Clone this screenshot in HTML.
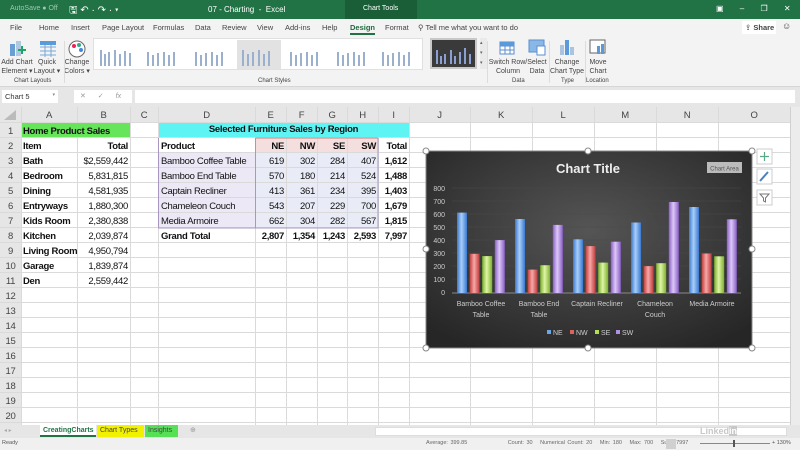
<!DOCTYPE html>
<html><head><meta charset="utf-8"><style>
*{margin:0;padding:0;box-sizing:border-box}
body{width:800px;height:450px;overflow:hidden;background:#fff;font-family:"Liberation Sans",sans-serif;position:relative}
.a{position:absolute;white-space:nowrap}
.t{font-size:9.5px;color:#111;letter-spacing:-0.3px}
.b{font-weight:bold}
.r{text-align:right}
.c{text-align:center}
.s{font-size:7px;color:#444}
</style></head><body>
<!-- title bar -->
<div class="a" style="left:0;top:0;width:800px;height:19px;background:#217346"></div>
<div class="a" style="left:345px;top:0;width:72px;height:19px;background:#1a5e38"></div>
<div class="a" style="left:10px;top:5px;font-size:7px;color:#9fc7ae">AutoSave ● Off</div>
<div class="a" style="left:69px;top:3px;font-size:10px;color:#fff">🖫 ↶ · ↷ · ▾</div>
<div class="a" style="left:208px;top:5px;font-size:8px;color:#fff">07 - Charting &nbsp;-&nbsp; Excel</div>
<div class="a" style="left:363px;top:5px;font-size:7px;color:#fff">Chart Tools</div>
<div class="a" style="left:716px;top:4px;font-size:8px;color:#fff;word-spacing:14px">▣ – ❐ ✕</div>
<!-- tabs -->
<div class="a" style="left:0;top:19px;width:800px;height:68px;background:#f3f3f3;border-bottom:1px solid #d6d6d6"></div>
<div class="a" style="left:10px;top:23px;font-size:7.5px;color:#444">File</div>
<div class="a" style="left:39px;top:23px;font-size:7.5px;color:#444">Home</div>
<div class="a" style="left:71px;top:23px;font-size:7.5px;color:#444">Insert</div>
<div class="a" style="left:102px;top:23px;font-size:7.5px;color:#444">Page Layout</div>
<div class="a" style="left:153px;top:23px;font-size:7.5px;color:#444">Formulas</div>
<div class="a" style="left:195px;top:23px;font-size:7.5px;color:#444">Data</div>
<div class="a" style="left:222px;top:23px;font-size:7.5px;color:#444">Review</div>
<div class="a" style="left:257px;top:23px;font-size:7.5px;color:#444">View</div>
<div class="a" style="left:285px;top:23px;font-size:7.5px;color:#444">Add-ins</div>
<div class="a" style="left:322px;top:23px;font-size:7.5px;color:#444">Help</div>
<div class="a" style="left:350px;top:23px;font-size:7.5px;color:#1e6b3f;font-weight:bold;border-bottom:2px solid #217346;padding-bottom:1px">Design</div>
<div class="a" style="left:385px;top:23px;font-size:7.5px;color:#444">Format</div>
<div class="a" style="left:418px;top:23px;font-size:7.5px;color:#444">⚲ Tell me what you want to do</div>
<div class="a" style="left:742px;top:21px;width:34px;height:13px;background:#fff;font-size:7.5px;color:#444;padding:2px 3px">⇪ <b>Share</b></div>
<div class="a" style="left:782px;top:21px;font-size:9px;color:#444">☺</div>
<!-- ribbon -->
<div class="a" style="left:2px;top:40px;width:28px;height:18px">
<svg width="28" height="18"><rect x="8" y="4" width="5" height="12" fill="#6a9fd4"/><rect x="14" y="1" width="5" height="15" fill="#b0c8e0"/><path d="M16 10h8M20 6v8" stroke="#21a366" stroke-width="2"/></svg></div>
<div class="a" style="left:37px;top:40px"><svg width="22" height="18"><rect x="3" y="1" width="16" height="4" fill="#5a9ad8"/><path d="M3 7h16M3 11h16M3 15h16M8 5v12M14 5v12" stroke="#7aa8d6"/></svg></div>
<div class="a" style="left:67px;top:39px"><svg width="20" height="20"><circle cx="10" cy="10" r="8" fill="#fff" stroke="#666"/><circle cx="7" cy="7" r="2" fill="#e25"/><circle cx="12" cy="6" r="2" fill="#3a8"/><circle cx="14" cy="11" r="2" fill="#48d"/></svg></div>
<div class="a s c" style="left:0;top:58px;width:34px;line-height:9px">Add Chart<br>Element ▾</div>
<div class="a s c" style="left:33px;top:58px;width:28px;line-height:9px">Quick<br>Layout ▾</div>
<div class="a s c" style="left:62px;top:58px;width:30px;line-height:9px">Change<br>Colors ▾</div>
<div class="a s" style="left:14px;top:78px;font-size:6px">Chart Layouts</div>
<div class="a" style="left:93px;top:38px;width:330px;height:32px;background:#fff;border:1px solid #e0e0e0"></div>
<svg class="a" style="left:93px;top:38px" width="340" height="34">
<rect x="144" y="2" width="44" height="29" fill="#e2e2e2"/>
<g stroke="#9ab0cc" stroke-width="2">
<path d="M8 12v16M12 16v12M16 14v14M22 12v16M27 16v12M32 13v15M37 15v13"/>
<path d="M55 14v14M60 17v11M65 15v13M71 14v14M76 17v11M81 14v14"/>
<path d="M103 14v14M108 17v11M113 15v13M119 14v14M124 17v11M129 14v14"/>
<path d="M150 12v16M155 16v12M160 14v14M166 12v16M171 16v12M176 13v15"/>
<path d="M198 14v14M203 17v11M208 15v13M214 14v14M219 17v11M224 14v14"/>
<path d="M245 14v14M250 17v11M255 15v13M261 14v14M266 17v11M271 14v14"/>
<path d="M290 14v14M295 17v11M300 15v13M306 14v14M311 17v11M316 14v14"/>
</g></svg>
<div class="a" style="left:430px;top:38px;width:47px;height:31px;background:#3a3a3a;border:2px solid #c8c8c8"></div>
<svg class="a" style="left:432px;top:44px" width="44" height="22"><path d="M5 6v14M9 12v8M13 10v10M19 6v14M23 12v8M28 8v12M33 4v16M38 10v10" stroke="#8aa0d0" stroke-width="2"/></svg>
<div class="a" style="left:480px;top:38px;width:7px;height:31px;background:#eaeaea;font-size:5px;color:#666;line-height:10px">▴<br>▾<br>▾</div>
<svg class="a" style="left:497px;top:38px" width="22" height="18"><rect x="3" y="4" width="14" height="12" fill="#fff" stroke="#5a8ed0"/><path d="M3 8h14M3 12h14M8 4v12M13 4v12" stroke="#5a8ed0"/><rect x="3" y="4" width="14" height="4" fill="#5a9ad8"/></svg>
<svg class="a" style="left:527px;top:38px" width="20" height="18"><rect x="2" y="2" width="15" height="12" fill="#8ab8e6" stroke="#5a8ed0"/><rect x="10" y="8" width="8" height="9" fill="#fff" stroke="#5a8ed0"/></svg>
<svg class="a" style="left:557px;top:38px" width="20" height="18"><rect x="3" y="7" width="4" height="10" fill="#aac4e0"/><rect x="8" y="2" width="4" height="15" fill="#5a9ad8"/><rect x="13" y="9" width="4" height="8" fill="#aac4e0"/></svg>
<svg class="a" style="left:588px;top:38px" width="20" height="18"><rect x="2" y="2" width="15" height="13" fill="#fff" stroke="#666"/><rect x="9" y="8" width="3" height="8" fill="#5a9ad8"/><rect x="13" y="6" width="3" height="10" fill="#5a9ad8"/></svg>
<div class="a s c" style="left:488px;top:58px;width:40px;line-height:9px">Switch Row/<br>Column</div>
<div class="a s c" style="left:526px;top:58px;width:22px;line-height:9px">Select<br>Data</div>
<div class="a s c" style="left:549px;top:58px;width:36px;line-height:9px">Change<br>Chart Type</div>
<div class="a s c" style="left:586px;top:58px;width:24px;line-height:9px">Move<br>Chart</div>
<div class="a s" style="left:258px;top:78px;font-size:6px">Chart Styles</div>
<div class="a s" style="left:512px;top:78px;font-size:6px">Data</div>
<div class="a s" style="left:561px;top:78px;font-size:6px">Type</div>
<div class="a s" style="left:586px;top:78px;font-size:6px">Location</div>
<div class="a" style="left:64px;top:41px;width:1px;height:42px;background:#dcdcdc"></div>
<div class="a" style="left:487px;top:41px;width:1px;height:42px;background:#dcdcdc"></div>
<div class="a" style="left:549px;top:41px;width:1px;height:42px;background:#dcdcdc"></div>
<div class="a" style="left:585px;top:41px;width:1px;height:42px;background:#dcdcdc"></div>
<!-- formula bar -->
<div class="a" style="left:0;top:87px;width:800px;height:20px;background:#e6e6e6"></div>
<div class="a" style="left:2px;top:90px;width:56px;height:13px;background:#fff;font-size:7.5px;color:#333;padding:2px 3px">Chart 5<span style="float:right;font-size:5px;color:#888">▾</span></div>
<div class="a" style="left:74px;top:90px;width:58px;height:13px;background:#fff;font-size:7px;color:#999;padding:2px 6px;word-spacing:10px">✕ ✓ <i>fx</i></div>
<div class="a" style="left:135px;top:90px;width:660px;height:13px;background:#fff"></div>
<!-- grid -->
<div class="a" style="left:0;top:107px;width:790px;height:16px;background:#e6e6e6"></div>
<div class="a" style="left:0;top:107px;width:21px;height:318px;background:#e6e6e6"></div>
<div class="a" style="left:790px;top:107px;width:10px;height:318px;background:#ececec;border-left:1px solid #d0d0d0"></div>
<div class="a" style="left:255px;top:138px;width:123px;height:15px;background:#f5dede"></div>
<div class="a" style="left:158px;top:153px;width:97px;height:75px;background:#ede8f6"></div>
<div class="a" style="left:255px;top:153px;width:123px;height:75px;background:#e9ecf7"></div>
<svg class="a" style="left:0;top:107px" width="790" height="318">
<g stroke="#dadada" stroke-width="1">
<path d="M21.5 0v318M77.5 0v318M130.5 0v318M158.5 0v318M255.5 0v318M286.5 0v318M317.5 0v318M347.5 0v318M378.5 0v318M409.5 0v318M470.5 0v318M532.5 0v318M594.5 0v318M656.5 0v318M718.5 0v318"/>
<path d="M0 15.5h790M0 30.5h790M0 45.5h790M0 60.5h790M0 75.5h790M0 90.5h790M0 105.5h790M0 120.5h790M0 135.5h790M0 150.5h790M0 165.5h790M0 180.5h790M0 195.5h790M0 210.5h790M0 225.5h790M0 240.5h790M0 255.5h790M0 270.5h790M0 285.5h790M0 300.5h790M0 315.5h790"/>
</g>
<rect x="22" y="16" width="108" height="14" fill="#66e45a"/>
<rect x="159" y="16" width="250" height="14" fill="#5ff4f4"/>
<path d="M158.5 31v90h219.5v-90M255.5 31v90" stroke="#a898c0" fill="none"/>
<path d="M255.5 31h122.5" stroke="#d08080"/>
<path d="M4 13l12-10v10z" fill="#bbb"/>
</svg>
<div class="a t c" style="left:21px;top:110px;width:56px;color:#444">A</div>
<div class="a t c" style="left:77px;top:110px;width:53px;color:#444">B</div>
<div class="a t c" style="left:130px;top:110px;width:28px;color:#444">C</div>
<div class="a t c" style="left:158px;top:110px;width:97px;color:#444">D</div>
<div class="a t c" style="left:255px;top:110px;width:31px;color:#444">E</div>
<div class="a t c" style="left:286px;top:110px;width:31px;color:#444">F</div>
<div class="a t c" style="left:317px;top:110px;width:30px;color:#444">G</div>
<div class="a t c" style="left:347px;top:110px;width:31px;color:#444">H</div>
<div class="a t c" style="left:378px;top:110px;width:31px;color:#444">I</div>
<div class="a t c" style="left:409px;top:110px;width:61px;color:#444">J</div>
<div class="a t c" style="left:470px;top:110px;width:62px;color:#444">K</div>
<div class="a t c" style="left:532px;top:110px;width:62px;color:#444">L</div>
<div class="a t c" style="left:594px;top:110px;width:62px;color:#444">M</div>
<div class="a t c" style="left:656px;top:110px;width:62px;color:#444">N</div>
<div class="a t c" style="left:718px;top:110px;width:72px;color:#444">O</div>
<div class="a t c" style="left:0;top:124px;width:21px;line-height:15px;color:#444">1<br>2<br>3<br>4<br>5<br>6<br>7<br>8<br>9<br>10<br>11<br>12<br>13<br>14<br>15<br>16<br>17<br>18<br>19<br>20</div>
<div class="a t b" style="left:23px;top:124px;line-height:15px">Home Product Sales<br>Item<br>Bath<br>Bedroom<br>Dining<br>Entryways<br>Kids Room<br>Kitchen<br>Living Room<br>Garage<br>Den</div>
<div class="a t r" style="left:77px;top:139px;width:51px;line-height:15px"><b>Total</b><br>$2,559,442<br>5,831,815<br>4,581,935<br>1,880,300<br>2,380,838<br>2,039,874<br>4,950,794<br>1,839,874<br>2,559,442</div>
<div class="a t b c" style="left:158px;top:124px;width:251px">Selected Furniture Sales by Region</div>
<div class="a t" style="left:161px;top:139px;line-height:15px"><b>Product</b><br>Bamboo Coffee Table<br>Bamboo End Table<br>Captain Recliner<br>Chameleon Couch<br>Media Armoire<br><b>Grand Total</b></div>
<div class="a t r" style="left:255px;top:139px;width:29px;line-height:15px"><b>NE</b><br>619<br>570<br>413<br>543<br>662<br><b>2,807</b></div>
<div class="a t r" style="left:286px;top:139px;width:29px;line-height:15px"><b>NW</b><br>302<br>180<br>361<br>207<br>304<br><b>1,354</b></div>
<div class="a t r" style="left:317px;top:139px;width:28px;line-height:15px"><b>SE</b><br>284<br>214<br>234<br>229<br>282<br><b>1,243</b></div>
<div class="a t r" style="left:347px;top:139px;width:29px;line-height:15px"><b>SW</b><br>407<br>524<br>395<br>700<br>567<br><b>2,593</b></div>
<div class="a t r b" style="left:378px;top:139px;width:29px;line-height:15px">Total<br>1,612<br>1,488<br>1,403<br>1,679<br>1,815<br>7,997</div>
<!-- chart -->
<svg class="a" style="left:420px;top:145px" width="360" height="210">
<defs>
<radialGradient id="bg" cx="50%" cy="40%" r="70%"><stop offset="0" stop-color="#555"/><stop offset="1" stop-color="#262626"/></radialGradient>
<linearGradient id="ne" x1="0" x2="1"><stop offset="0" stop-color="#3a78d0"/><stop offset=".45" stop-color="#a9cff8"/><stop offset="1" stop-color="#3a78d0"/></linearGradient>
<linearGradient id="nw" x1="0" x2="1"><stop offset="0" stop-color="#c03a3a"/><stop offset=".45" stop-color="#f6a8a8"/><stop offset="1" stop-color="#c03a3a"/></linearGradient>
<linearGradient id="se" x1="0" x2="1"><stop offset="0" stop-color="#7ab02a"/><stop offset=".45" stop-color="#dff5a8"/><stop offset="1" stop-color="#7ab02a"/></linearGradient>
<linearGradient id="sw" x1="0" x2="1"><stop offset="0" stop-color="#8a5ec8"/><stop offset=".45" stop-color="#dcc8f6"/><stop offset="1" stop-color="#8a5ec8"/></linearGradient>
</defs>
<rect x="6" y="6" width="326" height="197" fill="url(#bg)" stroke="#888"/>
<g stroke="#4a4a4a" stroke-width=".6"><path d="M32 43h289M32 56h289M32 69h289M32 82h289M32 95h289M32 108h289M32 121h289M32 134h289"/></g>
<path d="M32 148h289" stroke="#888"/>
<text x="168" y="28" fill="#eee" font-size="13" font-weight="bold" text-anchor="middle" font-family="Liberation Sans">Chart Title</text>
<rect x="287" y="17" width="35" height="11" fill="#bbb"/>
<text x="304.5" y="25.5" fill="#555" font-size="6" text-anchor="middle" font-family="Liberation Sans">Chart Area</text>
<g fill="#ccc" font-size="7" text-anchor="end" font-family="Liberation Sans">
<text x="25" y="46">800</text><text x="25" y="59">700</text><text x="25" y="72">600</text><text x="25" y="85">500</text><text x="25" y="98">400</text><text x="25" y="111">300</text><text x="25" y="124">200</text><text x="25" y="137">100</text><text x="25" y="150">0</text>
</g>
<g>
<rect x="37" y="67.6" width="10" height="80.4" fill="url(#ne)"/><rect x="49.6" y="108.8" width="10" height="39.2" fill="url(#nw)"/><rect x="62.2" y="111.1" width="10" height="36.9" fill="url(#se)"/><rect x="74.8" y="95.1" width="10" height="52.9" fill="url(#sw)"/>
<rect x="95" y="74" width="10" height="74" fill="url(#ne)"/><rect x="107.6" y="124.6" width="10" height="23.4" fill="url(#nw)"/><rect x="120.2" y="120.2" width="10" height="27.8" fill="url(#se)"/><rect x="132.8" y="79.9" width="10" height="68.1" fill="url(#sw)"/>
<rect x="153" y="94.3" width="10" height="53.7" fill="url(#ne)"/><rect x="165.6" y="101.1" width="10" height="46.9" fill="url(#nw)"/><rect x="178.2" y="117.6" width="10" height="30.4" fill="url(#se)"/><rect x="190.8" y="96.7" width="10" height="51.3" fill="url(#sw)"/>
<rect x="211" y="77.5" width="10" height="70.5" fill="url(#ne)"/><rect x="223.6" y="121.1" width="10" height="26.9" fill="url(#nw)"/><rect x="236.2" y="118.2" width="10" height="29.8" fill="url(#se)"/><rect x="248.8" y="57" width="10" height="91" fill="url(#sw)"/>
<rect x="269" y="62" width="10" height="86" fill="url(#ne)"/><rect x="281.6" y="108.5" width="10" height="39.5" fill="url(#nw)"/><rect x="294.2" y="111.3" width="10" height="36.7" fill="url(#se)"/><rect x="306.8" y="74.3" width="10" height="73.7" fill="url(#sw)"/>
</g>
<g fill="#ccc" font-size="7" text-anchor="middle" font-family="Liberation Sans">
<text x="61" y="161">Bamboo Coffee</text><text x="61" y="172">Table</text>
<text x="119" y="161">Bamboo End</text><text x="119" y="172">Table</text>
<text x="177" y="161">Captain Recliner</text>
<text x="235" y="161">Chameleon</text><text x="235" y="172">Couch</text>
<text x="292" y="161">Media Armoire</text>
</g>
<g font-size="7" fill="#ccc" font-family="Liberation Sans">
<rect x="127" y="185" width="4" height="4" fill="#6aa6ea"/><text x="133" y="190">NE</text>
<rect x="150" y="185" width="4" height="4" fill="#e06060"/><text x="156" y="190">NW</text>
<rect x="175" y="185" width="4" height="4" fill="#b0e050"/><text x="181" y="190">SE</text>
<rect x="196" y="185" width="4" height="4" fill="#b090e0"/><text x="202" y="190">SW</text>
</g>
<g fill="#fff" stroke="#888"><circle cx="6" cy="6" r="3"/><circle cx="168" cy="6" r="3"/><circle cx="332" cy="6" r="3"/><circle cx="6" cy="104" r="3"/><circle cx="332" cy="104" r="3"/><circle cx="6" cy="203" r="3"/><circle cx="168" cy="203" r="3"/><circle cx="332" cy="203" r="3"/></g>
<g fill="#fff" stroke="#ccc"><rect x="337" y="4" width="15" height="15"/><rect x="337" y="24" width="15" height="15"/><rect x="337" y="45" width="15" height="15"/></g>
<path d="M344.5 7v9M340 11.5h9" stroke="#5aaa88" stroke-width="1.2"/>
<path d="M340 36l8-9" stroke="#4a80c0" stroke-width="2"/>
<path d="M340 49h9l-3.5 4v4l-2-1v-3z" fill="none" stroke="#777"/>
</svg>
<!-- sheet tabs -->
<div class="a" style="left:0;top:425px;width:800px;height:13px;background:#e6e6e6"></div>
<div class="a" style="left:4px;top:427px;font-size:6px;color:#aaa">◂ ▸</div>
<div class="a" style="left:40px;top:425px;width:56px;height:12px;background:#fff;font-size:7px;color:#217346;font-weight:bold;padding:2px 3px;border-bottom:2px solid #217346">CreatingCharts</div>
<div class="a" style="left:97px;top:425px;width:47px;height:12px;background:#f2f200;font-size:7px;color:#444;padding:2px 3px">Chart Types</div>
<div class="a" style="left:145px;top:425px;width:33px;height:12px;background:#55e055;font-size:7px;color:#444;padding:2px 3px">Insights</div>
<div class="a" style="left:190px;top:426px;font-size:7px;color:#999">⊕</div>
<div class="a" style="left:375px;top:427px;width:412px;height:9px;background:#fff;border:1px solid #ddd"></div>
<div class="a" style="left:700px;top:426px;font-size:9px;color:#c8c8c8;font-weight:bold">Linked<span style="background:#c8c8c8;color:#fff">in</span></div>
<!-- status -->
<div class="a" style="left:0;top:438px;width:800px;height:12px;background:#f0f0f0"></div>
<div class="a" style="left:2px;top:440px;font-size:5.5px;color:#555">Ready</div>
<div class="a" style="left:426px;top:440px;font-size:5.5px;color:#666;word-spacing:1px">Average: 399.85 &nbsp;&nbsp;&nbsp;&nbsp;&nbsp;&nbsp;&nbsp;&nbsp;&nbsp;&nbsp;&nbsp;&nbsp;&nbsp;&nbsp; Count: 30 &nbsp; Numerical Count: 20 &nbsp; Min: 180 &nbsp; Max: 700 &nbsp; Sum: 7997</div>
<div class="a" style="left:666px;top:439px;width:10px;height:10px;background:#d0d0d0"></div>
<div class="a" style="left:700px;top:443px;width:70px;height:1px;background:#888"></div>
<div class="a" style="left:733px;top:440px;width:2px;height:7px;background:#555"></div>
<div class="a" style="left:772px;top:440px;font-size:5.5px;color:#555">+ 130%</div>
</body></html>
